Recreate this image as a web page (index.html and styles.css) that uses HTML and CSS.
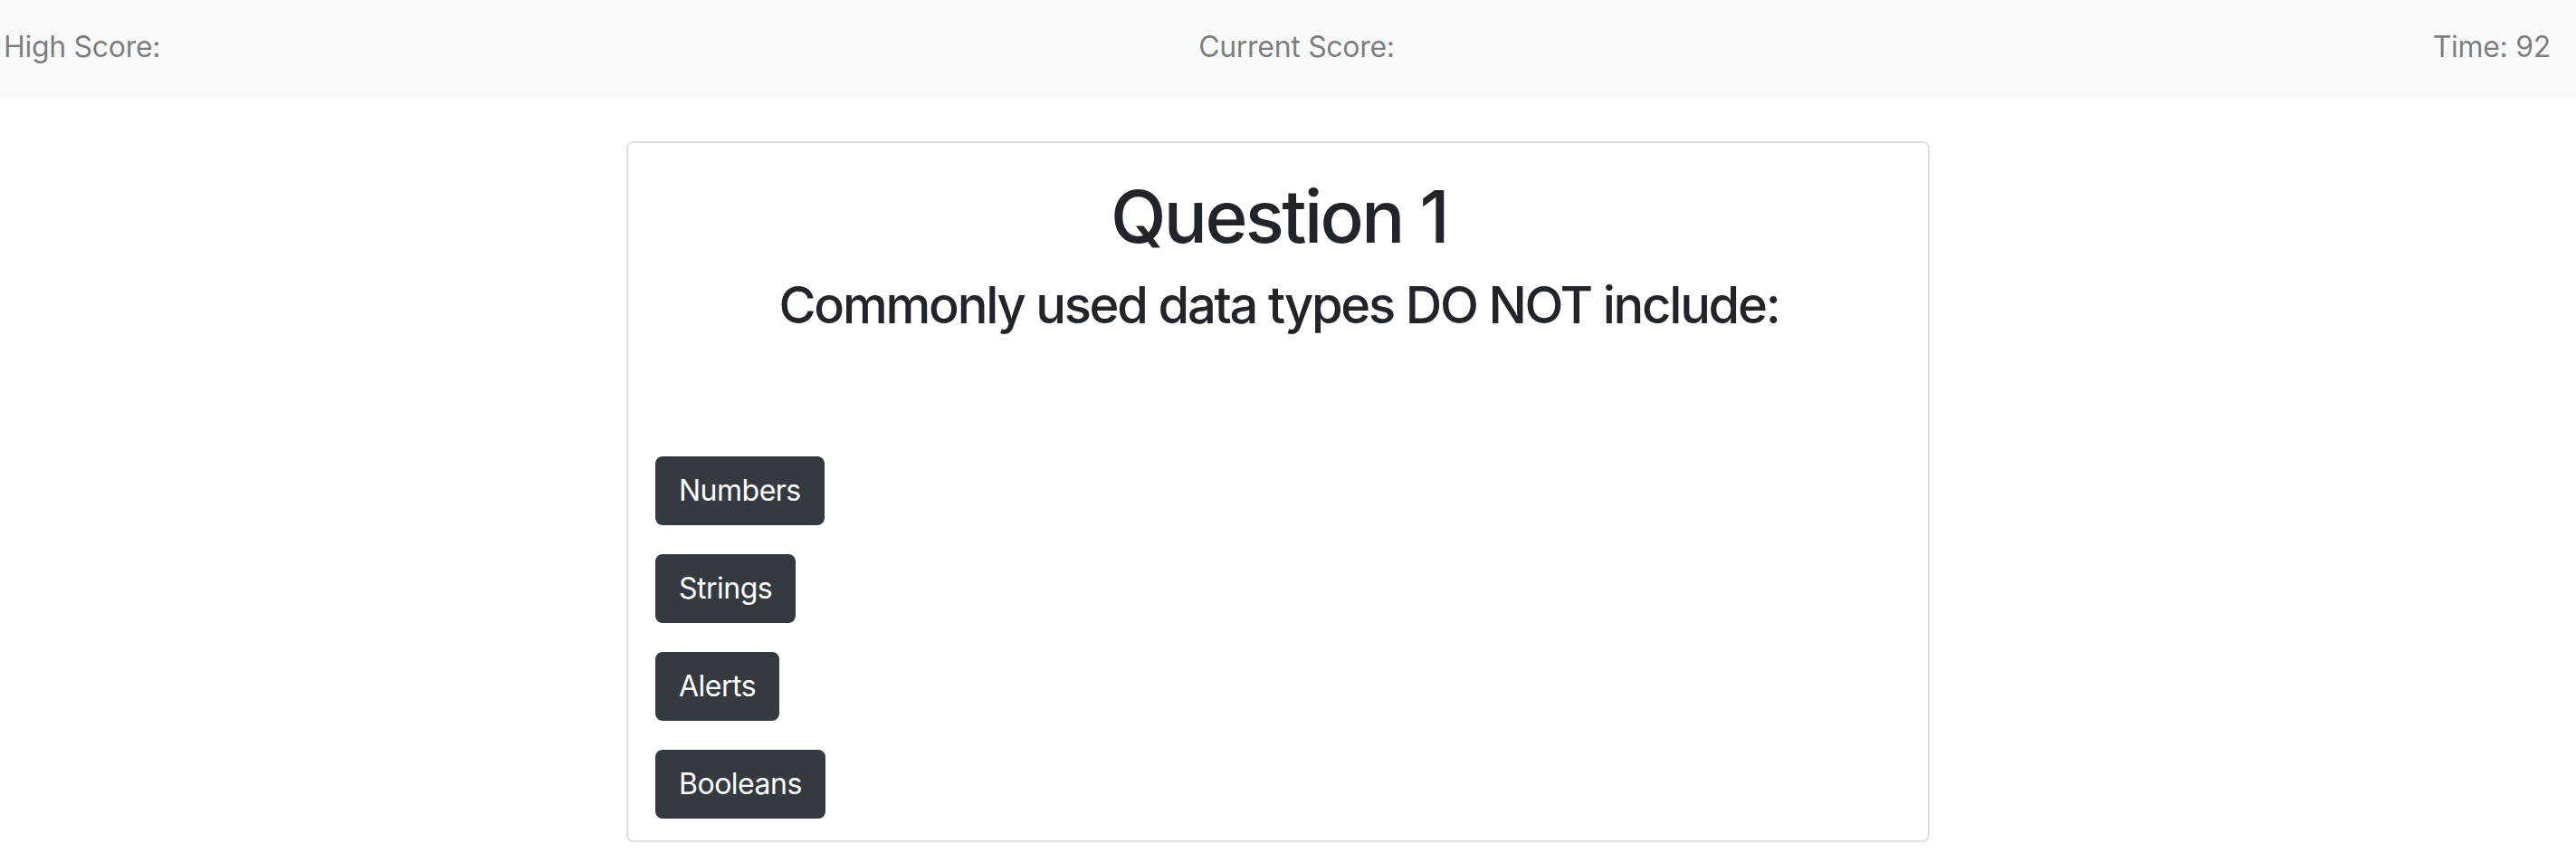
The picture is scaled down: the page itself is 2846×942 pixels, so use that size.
FILE: index.html
```html
<!DOCTYPE html>
<html lang="en">
<head>
<meta charset="utf-8">
<title>Code Quiz</title>
<link rel="stylesheet" href="styles.css">
</head>
<body>
<header class="navbar">
  <span class="nav-item">High Score:</span>
  <span class="nav-item">Current Score:</span>
  <span class="nav-item">Time: 92</span>
</header>
<main class="page">
  <section class="card">
    <h1 class="title">Question 1</h1>
    <h3 class="question">Commonly used data types DO NOT include:</h3>
    <div class="answers">
      <button class="btn">Numbers</button>
      <button class="btn">Strings</button>
      <button class="btn">Alerts</button>
      <button class="btn">Booleans</button>
    </div>
  </section>
</main>
</body>
</html>
```

FILE: styles.css
```css
* { box-sizing: border-box; }

body {
  margin: 0;
  font-family: Inter, "Liberation Sans", Arial, sans-serif;
  color: #212529;
  background: #fff;
}

.navbar {
  display: flex;
  justify-content: space-between;
  align-items: center;
  height: 108px;
  padding: 0 28px 5px 4px;
  background: #f8f9fa;
  font-size: 32px;
  line-height: 48px;
  color: rgba(0, 0, 0, 0.5);
  letter-spacing: -0.3px;
}

.page {
  padding: 48px 0 0 692px;
}

.card {
  width: 1440px;
  border: 2px solid #dfdfdf;
  border-radius: 8px;
  padding: 33px 28px 24px 30px;
}

.title {
  margin: 0 0 17px;
  font-size: 80px;
  font-weight: 500;
  line-height: 1.2;
  text-align: center;
  letter-spacing: -2.6px;
}

.question {
  margin: 0;
  font-size: 56px;
  font-weight: 500;
  line-height: 1.2;
  text-align: center;
  letter-spacing: -2.2px;
}

.answers {
  display: flex;
  flex-direction: column;
  align-items: flex-start;
  gap: 32px;
  margin-top: 133px;
}

.btn {
  font-family: inherit;
  font-size: 32px;
  line-height: 48px;
  padding: 12px 24px;
  border: 2px solid #343a40;
  border-radius: 8px;
  background: #343a40;
  color: #fff;
  letter-spacing: -0.5px;
}
```
